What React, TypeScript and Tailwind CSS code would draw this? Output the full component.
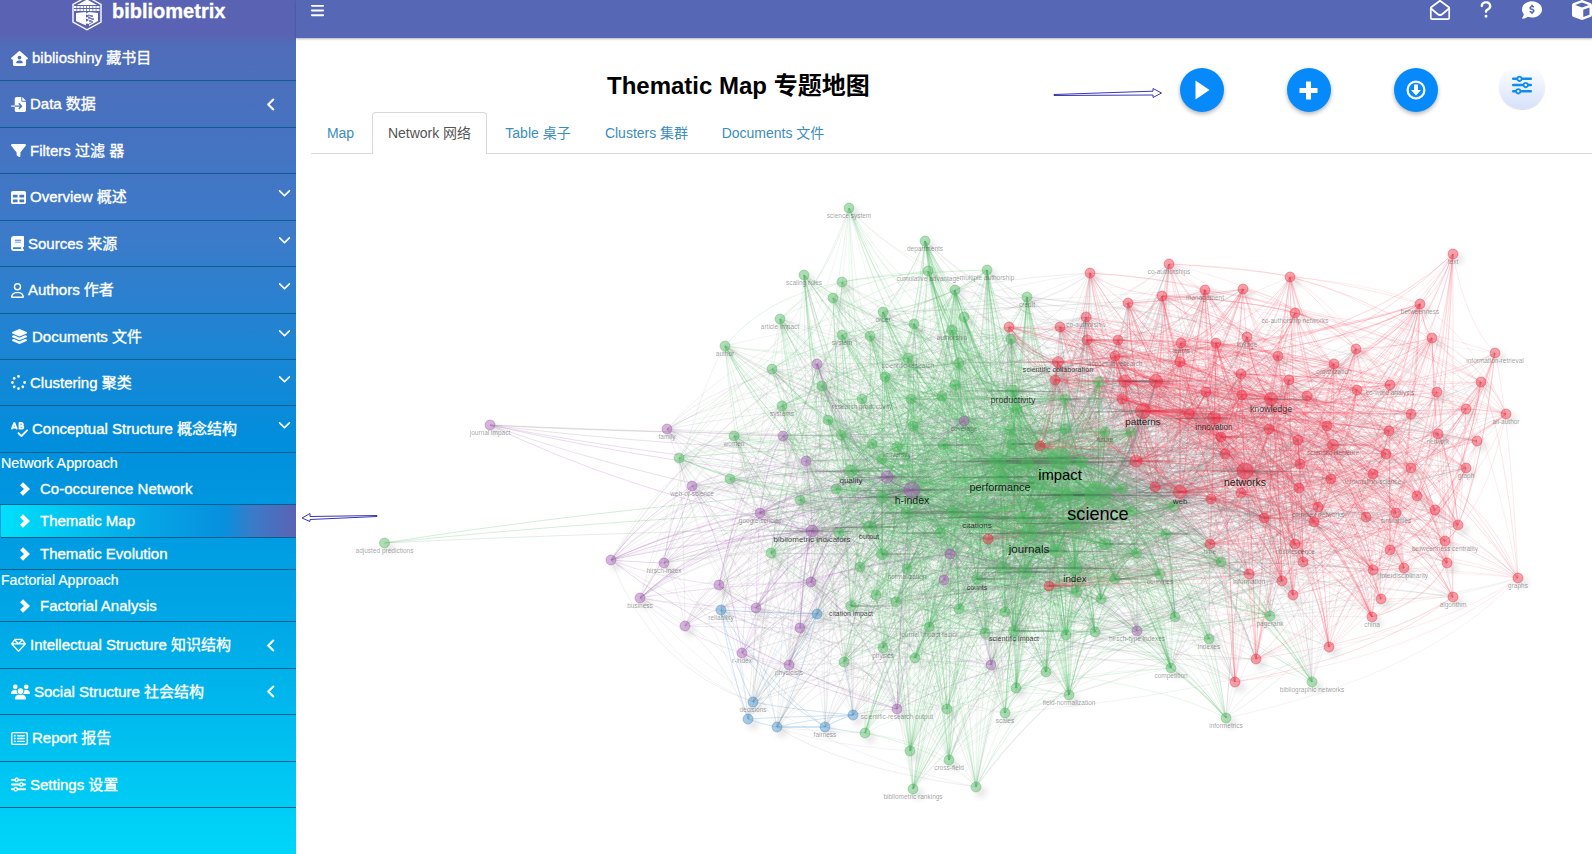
import React from "react";
import {
  FaHouseUser, FaFileImport, FaFilter, FaTable, FaBook, FaRegUser, FaLayerGroup, FaSpinner,
  FaSpellCheck, FaRegGem, FaUsers, FaRegRectangleList, FaSliders, FaChevronLeft, FaChevronDown,
  FaBars, FaQuestion, FaCommentDollar, FaCube,
} from "react-icons/fa6";

type Node = [number, number, string, number?, string?, number?, number?];

// x, y, cluster, radius, label, label size, label centre
const NODES: Node[] = [
  [490, 425, "p", 5, "journal impact"], [384.5, 543, "g", 5, "adjusted predictions"],
  [849, 208, "g", 5, "science system"], [925, 241, "g", 5, "departments"], [928, 271, "g", 5, "cumulative advantage"],
  [987, 270, "g", 5, "multiple authorship"], [804, 275, "g", 5, "scaling rules"], [842, 282, "g"], [833, 298, "g"],
  [955, 290, "g"], [883, 312, "g", 5, "order"], [780, 319, "g", 5, "article impact"], [964, 317, "g"], [914, 324, "g"],
  [952, 330, "g", 5, "authorship"], [842, 335, "g", 5, "system"], [870, 336, "g"], [725, 346, "g", 5, "author"],
  [1011, 339, "g"], [1009, 327, "r"], [908, 358, "g", 5, "scientific-research"], [959, 363, "g"], [817, 364, "p"],
  [772, 369, "g"], [885, 377, "g"], [822, 386, "g"], [955, 385, "g"], [942, 396, "g"],
  [862, 399, "g", 5, "research productivity"], [911, 399, "g"], [782, 406, "g", 5, "systems"], [828, 420, "g"],
  [841, 435, "g"], [964, 421, "p", 5, "coverage"], [913, 426, "g"], [734, 436, "g", 5, "women"],
  [667, 429, "p", 5, "family"], [783, 436, "p"], [872, 444, "g"], [897, 447, "g", 5, "university"], [943, 445, "g"],
  [679, 458, "g"], [806, 461, "p"], [882, 459, "g"], [851, 471, "g", 6, "quality", 8, 480.5], [887, 477, "p", 6],
  [730, 479, "g"], [692, 486, "p", 5, "web-of-science"], [836, 489, "g"], [912, 490, "p", 8, "h-index", 10.6, 501],
  [882, 497, "g", 6], [800, 500, "g"], [760, 513, "p", 5, "google scholar"], [1010, 430, "g"], [998, 461, "g", 8],
  [907, 513, "g", 6], [952, 512, "g", 6], [1027, 297, "g", 5, "credit"],
  [1013, 391, "g", 6, "productivity", 8.9, 400], [1099, 382, "g"], [1065, 399, "g"], [1017, 409, "g"],
  [1065, 429, "g"], [1105, 432, "g", 5, "future"], [1131, 432, "g"], [1012, 444, "g"],
  [1060, 458, "g", 11, "impact", 14.8, 475], [1082, 462, "g", 6], [1027, 463, "g", 6],
  [1000, 477, "g", 7, "performance", 10.9, 488], [1034, 483, "g"], [1067, 495, "g", 6],
  [1098, 495, "g", 13, "science", 18.1, 514], [1174, 506, "g"], [1123, 489, "g"], [1166, 534, "g"], [1040, 507, "g"],
  [1090, 273, "r"], [1169, 264, "r", 5, "co-authorships"], [1128, 303, "r"], [1162, 296, "r"],
  [1205, 290, "r", 5, "management"], [1243, 289, "r"], [1086, 317, "r", 5, "co-authorship"], [1060, 327, "r"],
  [1087, 340, "r"], [1118, 340, "r"], [1181, 343, "r", 5, "teams"], [1216, 343, "r"], [1247, 337, "r", 5, "linkage"],
  [1058, 362, "r", 5.5, "scientific collaboration", 7.2, 370], [1115, 356, "r", 5, "academic research"], [1180, 362, "r"],
  [1055, 380, "r"], [1125, 381, "r", 6], [1156, 381, "r", 6.5], [1122, 399, "r"], [1206, 392, "r"], [1242, 395, "r"],
  [1241, 374, "r"], [1278, 356, "r"], [1271, 399, "r", 6.5, "knowledge", 8.8, 409],
  [1143, 411, "r", 7.5, "patterns", 9.8, 422], [1189, 414, "r"], [1214, 418, "r", 6.3, "innovation", 8.2, 427],
  [1221, 437, "r"], [1269, 429, "r"], [1225, 454, "r"], [1040, 446, "r"], [1136, 461, "r", 6],
  [1245, 471, "r", 8, "networks", 10.5, 482.5], [1155, 487, "r"], [1180, 492, "r", 6.5, "web", 8, 501], [1241, 493, "r"],
  [1211, 499, "r"], [1264, 518, "r"], [988, 539, "r"], [1453, 254, "r", 5, "text"], [1290, 277, "r"],
  [1420, 304, "r", 5, "betweenness"], [1295, 313, "r", 5, "co-authorship networks"], [1432, 338, "r"], [1356, 349, "r"],
  [1495, 353, "r", 5, "information-retrieval"], [1334, 364, "r", 5, "organization"], [1481, 382, "r"], [1289, 380, "r"],
  [1390, 385, "r", 5, "co-word analysis"], [1357, 390, "r"], [1437, 392, "r"], [1307, 396, "r"], [1466, 409, "r"],
  [1506, 414, "r", 5, "all-author"], [1411, 414, "r"], [1327, 426, "r"], [1389, 431, "r"], [1438, 434, "r", 5, "network"],
  [1477, 441, "r"], [1298, 440, "r"], [1333, 445, "r", 5.5, "scientific literature"], [1386, 454, "r"],
  [1300, 464, "r"], [1411, 468, "r"], [1466, 468, "r", 5, "graph"], [1373, 474, "r", 5, "information-science"],
  [1331, 479, "r"], [1299, 488, "r"], [1417, 496, "r"], [1435, 510, "r"], [1318, 507, "r", 5, "complex networks"],
  [1396, 513, "r", 5, "similarities"], [1366, 517, "r"], [1314, 522, "r"], [1458, 525, "r"],
  [1445, 541, "r", 5, "betweenness centrality"], [1295, 544, "r", 5, "obsolescence"], [1390, 550, "r"], [1303, 562, "r"],
  [1447, 563, "r"], [1373, 570, "r"], [1404, 568, "r", 5, "interdisciplinarity"], [1518, 578, "r", 5, "graphs"],
  [1249, 574, "r", 5, "information"], [1282, 581, "r"], [1293, 595, "r"], [1381, 599, "r"],
  [1453, 597, "r", 5, "algorithm"], [1270, 616, "g", 5, "pagerank"], [1372, 617, "r", 5, "china"], [1329, 647, "r"],
  [611, 560, "p"], [664, 563, "p", 5, "hirsch-index"], [812, 531, "p", 6, "bibliometric indicators", 8, 539.5],
  [719, 585, "p"], [640, 598, "p", 5, "business"], [685, 626, "p"], [756, 608, "p"], [811, 582, "p"], [800, 628, "p"],
  [742, 653, "p", 5, "r-index"], [789, 665, "p", 5, "physicists"], [897, 709, "p", 5, "scientific-research output"],
  [950, 554, "p"], [944, 580, "p"], [991, 665, "p"], [721, 610, "b", 5, "reliability"], [817, 614, "b"],
  [753, 702, "b", 5, "decisions"], [748, 719, "b"], [777, 727, "b"], [825, 727, "b", 5, "fairness"], [853, 715, "b"],
  [771, 553, "g"], [839, 533, "g"], [869, 527, "g", 6, "output", 7.3, 536.5], [940, 533, "g"], [882, 554, "g", 5.5],
  [860, 567, "g"], [907, 569, "g", 5, "normalization"], [977, 579, "g", 5.3, "counts", 7, 587.5], [876, 595, "g"],
  [896, 602, "g"], [851, 606, "g", 5.3, "citation impact", 6.9, 613.5], [959, 609, "g"],
  [929, 627, "g", 5, "journal impact factor"], [883, 648, "g", 5, "physics"], [915, 658, "g"], [844, 662, "g"],
  [985, 633, "g"], [947, 709, "g"], [865, 733, "g"], [910, 751, "g"], [949, 760, "g", 5, "cross-field"],
  [913, 789, "g", 5, "bibliometric rankings"], [976, 787, "g"], [977, 517, "g", 6, "citations", 8, 525.5],
  [1029, 533, "g", 8, "journals", 11.6, 549.5], [1073, 523, "g", 8], [1023, 518, "g", 6], [1057, 551, "g", 7],
  [1105, 544, "g", 5.5], [1137, 553, "g"], [1075, 568, "g", 7, "index", 9.9, 578.5], [1003, 568, "g", 6.5],
  [1025, 572, "g", 6.5], [1115, 579, "g"], [1077, 592, "g"], [1101, 599, "g"], [1005, 612, "g"],
  [1014, 631, "g", 5.5, "scientific impact", 7.1, 638.5], [1066, 635, "g"], [1095, 632, "g"],
  [1160, 574, "g", 5, "countries"], [1175, 617, "g"], [1221, 562, "g"], [1209, 639, "g", 5, "indexes"],
  [1171, 668, "g", 5, "competition"], [1226, 718, "g", 5, "informetrics"], [1312, 682, "g", 5, "bibliographic networks"],
  [1046, 672, "g"], [1016, 688, "g"], [1069, 695, "g", 5, "field-normalization"], [1005, 713, "g", 5, "scales"],
  [1132, 511, "g", 5], [1137, 631, "p", 5, "hirsch-type indexes"], [1049, 586, "r"], [1210, 544, "r", 5, "time"],
  [1235, 682, "r"], [1256, 659, "r"],
];

const FILL: Record<string, string> = { g: "#4daf4a", r: "#e8202c", p: "#984ea3", b: "#377eb8" };
const NODE_FILL: Record<string, string> = { g: "#4cb862", r: "#f03448", p: "#a45db4", b: "#4191cf" };
const EDGE: Record<string, string> = { g: "#4cba62", r: "#f5445a", p: "#a850b8", b: "#4391d0" };

type Edge = { d: string; c: string; o: number; w: number };

// Long faint links: from, to, colour
const LONG_LINKS: [number, number, number, number, string][] = [
  [490, 425, 667, 432, "#9a8a9c"], [490, 425, 783, 450, "#9a8a9c"], [490, 425, 887, 477, "#b06abb"],
  [490, 425, 912, 490, "#b06abb"], [490, 425, 882, 520, "#9a8a9c"], [490, 425, 812, 531, "#b06abb"],
  [490, 425, 1000, 440, "#9a8a9c"], [384.5, 543, 912, 505, "#4cba62"], [384.5, 543, 1000, 477, "#4cba62"],
  [384.5, 543, 869, 527, "#8fb398"], [721, 610, 753, 702, "#4391d0"], [721, 610, 748, 719, "#4391d0"],
  [721, 610, 825, 727, "#4391d0"], [817, 614, 753, 702, "#4391d0"], [817, 614, 748, 719, "#4391d0"],
  [817, 614, 777, 727, "#4391d0"], [721, 610, 817, 614, "#4391d0"], [753, 702, 853, 715, "#4391d0"],
  [748, 719, 853, 715, "#4391d0"], [777, 727, 825, 727, "#2f86c8"], [777, 727, 825, 727, "#2f86c8"],
  [777, 727, 853, 715, "#4391d0"], [748, 719, 777, 727, "#4391d0"], [825, 727, 853, 715, "#4391d0"],
  [742, 653, 825, 727, "#4391d0"], [853, 715, 844, 662, "#4391d0"], [825, 727, 865, 733, "#4391d0"],
  [742, 653, 897, 709, "#a850b8"], [611, 560, 897, 709, "#a850b8"], [611, 560, 692, 486, "#a850b8"],
  [611, 560, 760, 513, "#a850b8"], [611, 560, 812, 531, "#a850b8"], [611, 560, 664, 563, "#a850b8"],
  [611, 560, 912, 490, "#a850b8"], [897, 709, 1137, 631, "#a850b8"], [692, 486, 640, 598, "#a850b8"],
];

function buildEdges() {
  let seed = 20231;
  const rnd = () => {
    seed = (seed * 1664525 + 1013904223) % 4294967296;
    return seed / 4294967296;
  };
  const grey: Edge[] = [];
  const tinted: Edge[] = [];
  const streaks: Edge[] = [];
  const outer = (n: Node) => Math.hypot(n[0] - 1080, (n[1] - 480) * 1.5);
  NODES.forEach((a, i) => {
    if (i < 2) return;
    const ra = a[3] ?? 5;
    const weights = NODES.map((b, j) => {
      if (j === i || j < 2) return 0;
      const dist = Math.hypot(a[0] - b[0], (a[1] - b[1]) * 0.75);
      const central = 0.4 + 1.2 * Math.exp(-outer(b) / 200);
      return Math.pow((b[3] ?? 5) / 5, 1.8) * central * Math.exp(-dist / 220) * (a[2] === b[2] ? 2.5 : 1);
    });
    const total = weights.reduce((s, w) => s + w, 0);
    const far = outer(a);
    const base = far > 330 ? 14 : far > 200 ? 20 : 25;
    const count = ra > 7 ? 62 : ra > 5.9 ? 38 : a[2] === "b" ? 9 : base;
    for (let k = 0; k < count; k++) {
      let t = rnd() * total;
      let j = 0;
      while (j < NODES.length - 1 && t > weights[j]) t -= weights[j++];
      const b = NODES[j];
      if (j === i) continue;
      const [s, e] = outer(a) > outer(b) ? [a, b] : [b, a];
      const dx = e[0] - s[0];
      const dy = e[1] - s[1];
      const fx = 0.28 + rnd() * 0.12;
      const fy = 0.66 + rnd() * 0.12;
      const same = a[2] === b[2];
      const faint = far > 250 ? 0.8 : 1;
      (same ? tinted : grey).push({
        d: `M${s[0]} ${s[1]}Q${(s[0] + dx * fx).toFixed(1)} ${(s[1] + dy * fy).toFixed(1)} ${e[0]} ${e[1]}`,
        c: same ? EDGE[a[2]] : "#808084",
        o: (same ? 0.16 + rnd() * 0.17 : 0.15 + rnd() * 0.1) * faint,
        w: rnd() > 0.95 ? 1.2 : 0.7,
      });
    }
    if (ra > 5.2 || (i % 5 === 0 && far < 220)) {
      const len = ra * 8;
      const dir = rnd() > 0.35 ? 1 : -1;
      const c = a[2] === "r" ? "#c8202f" : a[2] === "p" ? "#4d3b52" : "#2f5a3a";
      streaks.push({ d: `M${a[0]} ${a[1] - 1}L${a[0] + len * dir} ${a[1]}L${a[0]} ${a[1] + 1}Z`, c, o: 0.36, w: 0.4 });
      if (ra > 5.9) streaks.push({ d: `M${a[0]} ${a[1] - 1}L${a[0] - len * dir} ${a[1] + 1}L${a[0]} ${a[1] + 1}Z`, c: "#4a4a4a", o: 0.3, w: 0.4 });
    }
  });
  const long = LONG_LINKS.map(([x1, y1, x2, y2, c]) => ({
    d: `M${x1} ${y1}Q${x1 + (x2 - x1) * 0.4} ${y1 + (y2 - y1) * 0.6} ${x2} ${y2}`, c, o: 0.3, w: 0.8,
  }));
  return { lines: [...long, ...grey.slice(0, grey.length / 2), ...tinted, ...grey.slice(grey.length / 2)], streaks };
}

const EDGES = buildEdges();

function Network() {
  return (
    <svg className="block h-[700px] w-[1296px]" viewBox="296 154 1296 700" fontFamily="Liberation Sans, Arial, sans-serif">
      <defs>
        <filter id="soft" x="-5%" y="-5%" width="110%" height="110%"><feGaussianBlur stdDeviation="3.5" /></filter>
      </defs>
      <g filter="url(#soft)" fill="#000" opacity="0.13">
        {NODES.map((n, i) => <circle key={i} cx={n[0] + 5} cy={n[1] + 5} r={n[3] ?? 5} />)}
      </g>
      <g fill="none">
        {EDGES.lines.map((e, i) => <path key={i} d={e.d} stroke={e.c} strokeOpacity={e.o} strokeWidth={e.w} />)}
      </g>
      {EDGES.streaks.map((e, i) => <path key={i} d={e.d} fill={e.c} fillOpacity={e.o} stroke={e.c} strokeOpacity={e.o * 0.6} strokeWidth={e.w} />)}
      {NODES.map((n, i) => (
        <circle key={i} cx={n[0]} cy={n[1]} r={n[3] ?? 5} fill={NODE_FILL[n[2]]} fillOpacity={0.45} stroke={FILL[n[2]]} strokeOpacity={0.42} strokeWidth={0.9} />
      ))}
      {NODES.filter((n) => n[4]).map((n, i) => {
        const size = n[5] ?? 6.5;
        const mid = n[6] ?? n[1] + 7.5;
        return (
          <text key={i} x={n[0]} y={mid + size * 0.32} fontSize={size} textAnchor="middle" fill="#000" fillOpacity={size > 14 ? 1 : size > 9 ? 0.85 : size > 6.8 ? 0.72 : 0.4}>
            {n[4]}
          </text>
        );
      })}
    </svg>
  );
}

function Logo() {
  return (
    <svg className="h-[36px] w-[30px]" viewBox="0 0 30 36" fill="none" stroke="#fff">
      <path d="M15 1.500 29 9.500V27L15 34.800 1 27V9.500Z" strokeWidth="1.400" />
      <path d="M15 4.500 25 10H5ZM4 18 14 17v13.500L4 26ZM26 18v8L17 31v-2l-5-1 5-3-4-2 5-2-5-2 4-2Z" fill="#fff" stroke="none" />
      <path d="M2 12h26M2 15h26" strokeWidth="1.800" strokeDasharray="2.500 0.700" />
      <path d="M16 20l5 1-5 2 6 1-5 2 4 1-4 2" strokeWidth="0.900" stroke="#5a63b3" />
    </svg>
  );
}

type Item = { icon: React.ReactNode; text: string; h: string; arrow?: "left" | "down" };

function Row({ icon, text, h, arrow }: Item) {
  return (
    <div className={`flex items-center border-b border-[#0b5f8a] pl-[11px] ${h}`}>
      <span className="flex text-[15px]">{icon}</span>
      <span className="ml-1 whitespace-pre">{text}</span>
      {arrow === "left" && <FaChevronLeft className="mr-[18px] ml-auto text-[13px] [stroke-width:26] [stroke:white]" />}
      {arrow === "down" && <FaChevronDown className="mr-[5px] mb-[9px] ml-auto text-[13px]" />}
    </div>
  );
}

function Sub({ text, cls }: { text: string; cls: string }) {
  return (
    <div className={`flex items-center border-[#0b5f8a] ${cls}`}>
      <svg className="h-[14px] w-[12px]" viewBox="0 0 12 14"><path d="M1 3.200 4 0.200 11 7 4 13.800 1 10.800 5 7Z" fill="#fff" /></svg>
      <span className="ml-[9px]">{text}</span>
    </div>
  );
}

const TOP: Item[] = [
  { icon: <FaHouseUser className="w-[17px]" />, text: "biblioshiny 藏书目", h: "h-[43px] pb-[2px]" },
  { icon: <FaFileImport />, text: "Data 数据", h: "h-[47px]", arrow: "left" },
  { icon: <FaFilter />, text: "Filters 过滤 器", h: "h-[46px]" },
  { icon: <FaTable />, text: "Overview 概述", h: "h-[47px]", arrow: "down" },
  { icon: <FaBook className="w-[13px]" />, text: "Sources 来源", h: "h-[46px]", arrow: "down" },
  { icon: <FaRegUser className="w-[13px]" />, text: "Authors 作者", h: "h-[47px]", arrow: "down" },
  { icon: <FaLayerGroup className="w-[17px]" />, text: "Documents 文件", h: "h-[46px]", arrow: "down" },
  { icon: <FaSpinner />, text: "Clustering 聚类", h: "h-[46px]", arrow: "down" },
  { icon: <FaSpellCheck className="w-[17px] text-[17px]" />, text: "Conceptual Structure 概念结构", h: "h-[47px]", arrow: "down" },
];

const BOTTOM: Item[] = [
  { icon: <FaRegGem />, text: "Intellectual Structure 知识结构", h: "h-[47px]", arrow: "left" },
  { icon: <FaUsers className="w-[19px] text-[18px]" />, text: "Social Structure 社会结构", h: "h-[46px]", arrow: "left" },
  { icon: <FaRegRectangleList className="w-[17px] text-[17px]" />, text: "Report 报告", h: "h-[47px]" },
  { icon: <FaSliders />, text: "Settings 设置", h: "h-[46px]" },
];

const TABS = [
  { text: "Map", w: "w-[61px] pr-[2px]" },
  { text: "Network 网络", w: "w-[115px]", active: true },
  { text: "Table 桌子", w: "w-[102px]" },
  { text: "Clusters 集群", w: "w-[115px]" },
  { text: "Documents 文件", w: "w-[138px]" },
];

const ROUND = "flex h-11 w-11 items-center justify-center rounded-full bg-[#0689fb] text-white shadow-[0_2px_4px_rgba(0,0,0,0.3)]";

export default function App() {
  return (
    <div className="relative flex h-[854px] w-[1592px] overflow-hidden bg-white font-['Liberation_Sans','Noto_Sans_CJK_SC',sans-serif]">
      <aside className="flex w-[296px] shrink-0 flex-col bg-[linear-gradient(180deg,#5a63b3_0px,#5a63b3_34px,#4f6cb9_44px,#3b7bca_240px,#018edc_440px,#00a7e6_620px,#00d6f9_854px)] text-[15px] leading-5 text-white [-webkit-text-stroke:0.35px_white]">
        <div className="flex h-[38px] items-start pl-[72px]">
          <div className="-mt-[5px]"><Logo /></div>
          <span className="ml-[10px] text-[20px] leading-[23px] font-bold">bibliometrix</span>
        </div>
        {TOP.map((r) => <Row key={r.text} {...r} />)}
        <div className="flex h-[23px] items-center pb-1 pl-[1px] text-[14.3px] [-webkit-text-stroke:0.2px_white]">Network Approach</div>
        <Sub text="Co-occurence Network" cls="h-[29px] border-b pb-[3px] pl-[19px]" />
        <Sub text="Thematic Map" cls="ml-px h-[33px] border-b pl-[18px] bg-[linear-gradient(90deg,#00e0fb_0%,#00d4f6_10%,#05a5e6_50%,#078fdd_76%,#3a7bca_85%,#5a63b3_100%)]" />
        <Sub text="Thematic Evolution" cls="h-[32px] border-b pl-[19px]" />
        <div className="flex h-[23px] items-center pb-1 pl-[1px] text-[14.1px] [-webkit-text-stroke:0.2px_white]">Factorial Approach</div>
        <Sub text="Factorial Analysis" cls="h-[29px] border-b pb-[3px] pl-[19px]" />
        {BOTTOM.map((r) => <Row key={r.text} {...r} />)}
      </aside>

      <main className="flex w-[1296px] flex-col">
        <header className="z-10 flex h-[38px] shrink-0 items-start overflow-x-clip bg-[#5567b5] pl-[14px] text-white shadow-[0_1px_2px_rgba(0,0,0,0.3)]">
          <FaBars className="mt-[3px] text-[15px]" />
          <div className="ml-auto flex items-start">
            <svg className="h-[21px] w-[22px]" viewBox="0 0 22 21" fill="none" stroke="#fff" strokeWidth="1.700" strokeLinejoin="round">
              <path d="M1.800 7.500 11 0.800l9.200 6.700V18a1.200 1.200 0 0 1-1.200 1.200H3A1.200 1.200 0 0 1 1.800 18Z" />
              <path d="M2 8.500 8.500 14q2.500 2 5 0l6.500-5.500" />
            </svg>
            <FaQuestion className="ml-[28px] h-[19px] w-[14px]" />
            <FaCommentDollar className="ml-[29px] h-[20px] w-[20px]" />
            <FaCube className="-mr-[1px] ml-[29px] h-[20px] w-[22px]" />
          </div>
        </header>

        <div className="flex h-[74px] shrink-0 items-start pl-[311px]">
          <h1 className="mt-[31px] w-[573px] text-[24px] leading-[34px] font-bold text-black">Thematic Map 专题地图</h1>
          <div className="mt-[30px] flex gap-[63px]">
            <button className={ROUND}>
              <svg className="h-[20px] w-[15px]" viewBox="0 0 15 20"><path d="M0.500 0.500 14.500 10 0.500 19.500Z" fill="#fff" /></svg>
            </button>
            <button className={ROUND}>
              <svg className="-ml-[2px] h-[19px] w-[19px]" viewBox="0 0 19 19"><path d="M7 0.500h5V7h6.500v5H12v6.500H7V12H0.500V7H7Z" fill="#fff" /></svg>
            </button>
            <button className={ROUND}>
              <svg className="-ml-[1px] h-[20px] w-[20px]" viewBox="0 0 20 20" fill="none"><circle cx="10" cy="10" r="8.400" stroke="#fff" strokeWidth="2.200" /><path d="M8 4.500h4V10h3l-5 5.500L5 10h3Z" fill="#fff" /></svg>
            </button>
            <button className="-mt-[4px] -ml-[2px] flex h-[45px] w-[46px] items-center justify-center rounded-full bg-[linear-gradient(180deg,#ffffff_5%,#d5e1fb_100%)] text-[#0f8cf0] shadow-[0_1px_1px_rgba(0,0,0,0.15)]">
              <FaSliders className="mb-[3px] h-[20px] w-[20px]" />
            </button>
          </div>
        </div>

        <nav className="ml-[15px] flex h-[42px] shrink-0 border-b border-[#d9d9d9] text-[14px] leading-5">
          {TABS.map((t) => (
            <div
              key={t.text}
              className={
                t.active
                  ? `${t.w} -mb-px flex items-center justify-center rounded-t-[4px] border border-b-0 border-[#d9d9d9] bg-white pb-[2px] text-[#555]`
                  : `${t.w} flex items-center justify-center text-[#3c8dbc]`
              }
            >
              {t.text}
            </div>
          ))}
        </nav>
        <Network />
      </main>

      <svg className="absolute top-[511px] left-[301px] h-[13px] w-[77px]" viewBox="0 0 77 13" fill="none" stroke="#3b36b4" strokeWidth="1">
        <path d="M9 5.500 76 4.500V5.500L9 8.500V10.500L1 7 9 2.500Z" />
      </svg>
      <svg className="absolute top-[87px] left-[1053px] h-[13px] w-[110px]" viewBox="0 0 110 13" fill="none" stroke="#3b36b4" strokeWidth="1">
        <path d="M1 7.500 100 4.200V1.500L108.500 6 100 10.500V8L1 8.500Z" />
      </svg>
    </div>
  );
}
